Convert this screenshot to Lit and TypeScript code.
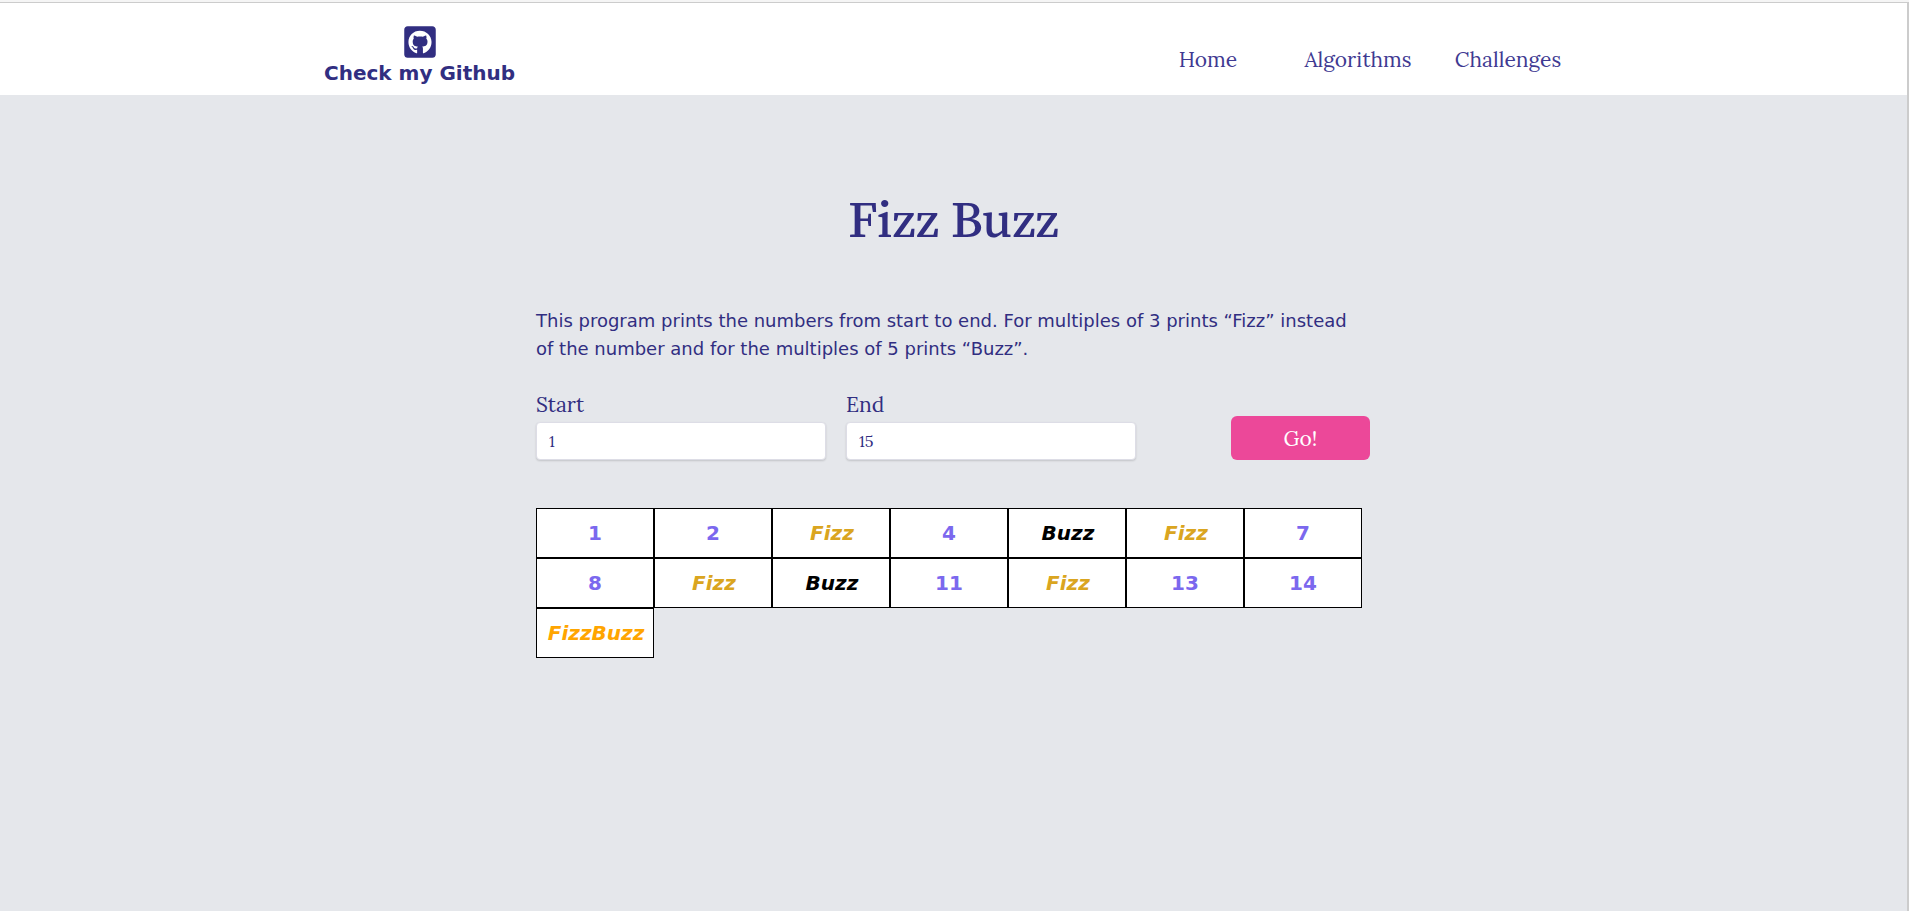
import { LitElement, html, css } from "lit";
import { customElement, state } from "lit/decorators.js";

type Entry = { text: string; kind: string };

const entryFor = (n: number): Entry => {
  if (n % 15 === 0) return { text: "FizzBuzz", kind: "fizzbuzz" };
  if (n % 3 === 0) return { text: "Fizz", kind: "fizz" };
  if (n % 5 === 0) return { text: "Buzz", kind: "buzz" };
  return { text: String(n), kind: "number" };
};

@customElement("site-header")
class SiteHeader extends LitElement {
  static styles = css`
    :host {
      display: block;
      background: #fff;
      color: #312e81;
    }
    .bar {
      display: flex;
      justify-content: space-between;
      align-items: center;
      max-width: 1259px;
      margin: 0 auto;
      padding: 21px 0 8px;
    }
    .brand {
      display: flex;
      flex-direction: column;
      align-items: center;
      color: inherit;
      text-decoration: none;
      font-size: 20px;
      font-weight: 700;
      line-height: 27px;
    }
    .logo {
      display: block;
      width: 36px;
      height: 36px;
      fill: currentColor;
    }
    .links {
      display: grid;
      grid-template-columns: repeat(3, 150px);
      padding-top: 8px;
      text-align: center;
    }
    .link {
      color: #3f3a92;
      text-decoration: none;
      font-family: Lora, "Liberation Serif", serif;
      font-size: 21px;
      line-height: 28px;
    }
  `;

  render() {
    return html`
      <header class="bar">
        <a class="brand" href="#github">
          <svg class="logo" viewBox="0 0 448 512" aria-hidden="true">
            <path
              d="M400 32H48C21.500 32 0 53.500 0 80v352c0 26.500 21.500 48 48 48h352c26.500 0 48-21.500 48-48V80c0-26.500-21.500-48-48-48zM277.300 415.700c-8.400 1.500-11.500-3.700-11.500-8 0-5.400.2-33 .2-55.300 0-15.600-5.200-25.500-11.300-30.700 37-4.100 76-9.200 76-73.100 0-18.200-6.500-27.300-17.100-39 1.700-4.300 7.400-22-1.700-45-13.900-4.300-45.700 17.900-45.700 17.900-13.200-3.700-27.500-5.600-41.600-5.600-14.100 0-28.400 1.900-41.600 5.600 0 0-31.800-22.200-45.700-17.900-9.100 22.900-3.500 40.600-1.700 45-10.600 11.700-15.600 20.800-15.600 39 0 63.600 37.300 69 74.300 73.100-4.800 4.300-9.100 11.700-10.600 22.300-9.500 4.300-33.800 11.700-48.300-13.900-9.100-15.800-25.500-17.100-25.500-17.100-16.200-.2-1.100 10.200-1.100 10.200 10.800 5 18.400 24.200 18.400 24.200 9.700 29.700 56.100 19.700 56.100 19.700 0 13.900.2 36.500.2 40.600 0 4.300-3 9.500-11.500 8-66-22.100-112.200-84.900-112.200-158.300 0-91.800 70.200-161.500 162-161.500S388 165.600 388 257.400c.1 73.400-44.700 136.300-110.700 158.300z"
            />
          </svg>
          <span>Check my Github</span>
        </a>
        <nav class="links">
          <a class="link" href="#home">Home</a>
          <a class="link" href="#algorithms">Algorithms</a>
          <a class="link" href="#challenges">Challenges</a>
        </nav>
      </header>
    `;
  }
}

@customElement("app-root")
class AppRoot extends LitElement {
  @state() private entries: Entry[] = [];
  private start = 1;
  private end = 15;

  static styles = css`
    :host {
      display: block;
      box-sizing: border-box;
      min-height: 100vh;
      border-top: 2px solid #f5f5f5;
      background: #e5e7eb;
      color: #312e81;
      font-family: "DejaVu Sans", sans-serif;
    }
    .frame {
      box-sizing: border-box;
      min-height: calc(100vh - 2px);
      border-top: 1px solid #ccc;
      border-right: 2px solid #ccc;
    }
    .content {
      max-width: 835px;
      margin: 0 auto;
      padding: 94px 16px 48px;
    }
    .title {
      margin: 0;
      text-align: center;
      font-family: "Source Serif 4", "Liberation Serif", serif;
      font-size: 51px;
      font-weight: 500;
      line-height: 60px;
    }
    .intro {
      max-width: 826px;
      margin: 58px 0 0;
      font-size: 18px;
      line-height: 28px;
    }
    .form {
      display: grid;
      grid-template-columns: minmax(0, 290px) minmax(0, 290px) 1fr;
      gap: 20px;
      align-items: end;
      max-width: 834px;
      margin-top: 28px;
    }
    .field {
      display: flex;
      flex-direction: column;
      gap: 3px;
      font-family: Lora, "Liberation Serif", serif;
    }
    .label {
      font-size: 21px;
      line-height: 28px;
    }
    .input {
      box-sizing: border-box;
      width: 100%;
      height: 38px;
      padding: 0 12px;
      border: 1px solid #dddde6;
      border-radius: 4px;
      background: #fff;
      box-shadow: 0 1px 2px rgba(0, 0, 0, 0.15);
      color: inherit;
      font: 16px Lora, "Liberation Serif", serif;
    }
    .go {
      justify-self: end;
      width: 139px;
      height: 44px;
      padding: 0;
      border: 0;
      border-radius: 6px;
      background: #ec4899;
      color: #fff;
      font: 21px Lora, "Liberation Serif", serif;
    }
    .results {
      display: grid;
      grid-template-columns: repeat(auto-fill, 118px);
      margin: 48px 0 0;
      padding: 0;
      list-style: none;
    }
    .cell {
      box-sizing: border-box;
      height: 50px;
      border: 1px solid #000;
      background: #fff;
      text-align: center;
      font-size: 20px;
      font-weight: 700;
      line-height: 48px;
    }
    .number {
      color: #7b68ee;
    }
    .fizz,
    .buzz,
    .fizzbuzz {
      padding-left: 2px;
      font-style: italic;
    }
    .fizz {
      color: #daa520;
    }
    .buzz {
      color: #000;
    }
    .fizzbuzz {
      color: #ffa500;
    }
  `;

  constructor() {
    super();
    this.entries = this.compute();
  }

  private compute(): Entry[] {
    const list: Entry[] = [];
    for (let n = this.start; n <= this.end; n++) list.push(entryFor(n));
    return list;
  }

  private submit(event: Event) {
    event.preventDefault();
    const data = new FormData(event.target as HTMLFormElement);
    this.start = Number(data.get("start"));
    this.end = Number(data.get("end"));
    this.entries = this.compute();
  }

  render() {
    return html`
      <div class="frame">
        <site-header></site-header>
        <main class="content">
          <h1 class="title">Fizz Buzz</h1>
          <p class="intro">
            This program prints the numbers from start to end. For multiples of
            3 prints “Fizz” instead of the number and for the multiples of 5
            prints “Buzz”.
          </p>
          <form class="form" @submit=${this.submit}>
            <div class="field">
              <label class="label" for="start">Start</label>
              <input class="input" id="start" name="start" inputmode="numeric" value="1" />
            </div>
            <div class="field">
              <label class="label" for="end">End</label>
              <input class="input" id="end" name="end" inputmode="numeric" value="15" />
            </div>
            <button class="go" type="submit">Go!</button>
          </form>
          <ol class="results">
            ${this.entries.map(
              (entry) => html`<li class="cell ${entry.kind}">${entry.text}</li>`
            )}
          </ol>
        </main>
      </div>
    `;
  }
}
